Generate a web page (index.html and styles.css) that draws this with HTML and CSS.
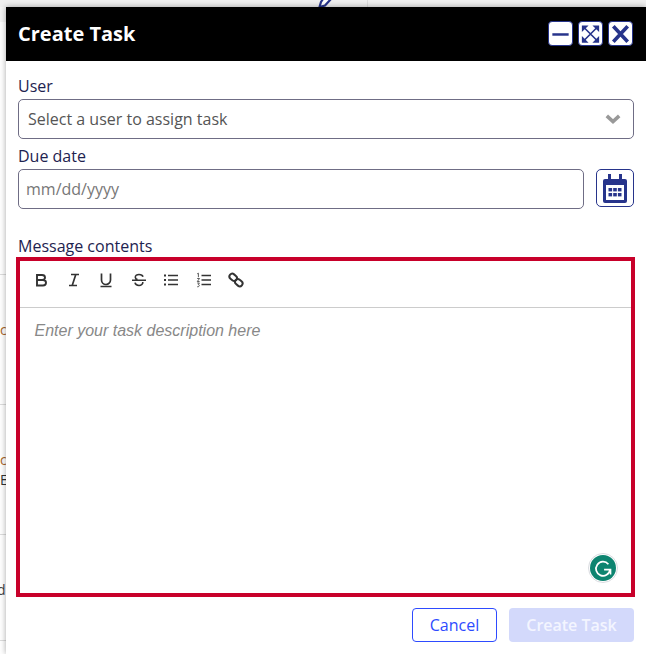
FILE: index.html
```html
<!DOCTYPE html>
<html lang="en">
<head>
<meta charset="utf-8">
<title>Create Task</title>
<link rel="stylesheet" href="styles.css">
</head>
<body>
<div class="backdrop" aria-hidden="true">
  <svg class="bg-pencil" viewBox="0 0 16 8" width="16" height="8"><path d="M1.500 7 L3 2 L5 -1 L13 -1 L7 5.500 Z" fill="#fff" stroke="#27348b" stroke-width="2.200"/></svg>
  <span class="bg-vline"></span>
  <span class="bg-frag f1">c</span>
  <span class="bg-frag f2">c</span>
  <span class="bg-frag f3">E</span>
  <span class="bg-frag f4">d</span>
  <span class="bg-line l1"></span>
  <span class="bg-line l2"></span>
  <span class="bg-line l3"></span>
  <span class="bg-line l4"></span>
</div>
<main class="dialog">
  <header class="head">
    <h1 class="title">Create Task</h1>
    <div class="win-btns">
      <button class="win-btn"><svg viewBox="0 0 24 24" width="24" height="24"><path d="M3.500 12.500H20.500" stroke="#27348b" stroke-width="2.600" fill="none"/></svg></button>
      <button class="win-btn"><svg viewBox="0 0 24 24" width="24" height="24"><g fill="none" stroke="#27348b" stroke-width="1.700"><path d="M6 6 L18 18 M18 6 L6 18"/></g><g fill="#27348b"><path d="M3 3H10L3 10Z"/><path d="M21 3H14L21 10Z"/><path d="M3 21H10L3 14Z"/><path d="M21 21H14L21 14Z"/></g></svg></button>
      <button class="win-btn"><svg viewBox="0 0 24 24" width="24" height="24"><path d="M4.500 4 L19.500 20 M19.500 4 L4.500 20" stroke="#27348b" stroke-width="3.800" fill="none"/></svg></button>
    </div>
  </header>
  <section class="body">
    <label class="label label-user">User</label>
    <div class="field select">
      <span>Select a user to assign task</span>
      <svg class="chev" viewBox="0 0 16 10" width="16" height="10"><path d="M1.800 1.800 L8 7.500 L14.200 1.800" fill="none" stroke="#999" stroke-width="3.600"/></svg>
    </div>
    <label class="label label-date">Due date</label>
    <div class="date-row">
      <div class="field date">mm/dd/yyyy</div>
      <button class="cal-btn">
        <svg viewBox="0 0 24 29" width="24" height="29"><path d="M0 7a2 2 0 0 1 2-2h20a2 2 0 0 1 2 2v20a2 2 0 0 1-2 2H2a2 2 0 0 1-2-2Z" fill="#27348b"/><rect x="5" y="0" width="3" height="7" fill="#27348b"/><rect x="16" y="0" width="3" height="7" fill="#27348b"/><rect x="3" y="11" width="18" height="15" fill="#fff"/><g fill="#27348b"><rect x="5.500" y="14" width="3.600" height="3.400"/><rect x="10.200" y="14" width="3.600" height="3.400"/><rect x="14.900" y="14" width="3.600" height="3.400"/><rect x="5.500" y="19" width="3.600" height="3.400"/><rect x="10.200" y="19" width="3.600" height="3.400"/><rect x="14.900" y="19" width="3.600" height="3.400"/></g></svg>
      </button>
    </div>
    <label class="label label-msg">Message contents</label>
    <div class="editor">
      <div class="toolbar">
        <span class="tool"><svg viewBox="0 0 16 16" width="16" height="16"><path d="M4 3H9C13 3 13 8 9 8H4ZM4 8H10C14 8 14 13.500 10 13.500H4Z" fill="none" stroke="#333" stroke-width="1.900"/></svg></span>
        <span class="tool"><svg viewBox="0 0 16 16" width="16" height="16"><path d="M5 2.500H13M3 13.500H11M9.800 2.500L6.200 13.500" fill="none" stroke="#333" stroke-width="1.700"/></svg></span>
        <span class="tool"><svg viewBox="0 0 16 16" width="16" height="16"><path d="M3.500 1.500V8a4.500 4.500 0 0 0 9 0V1.500M2.500 14.500H13.500" fill="none" stroke="#333" stroke-width="1.700"/></svg></span>
        <span class="tool"><svg viewBox="0 0 16 16" width="16" height="16"><path d="M12 4.800C11.500 3 10 2.500 8 2.500 6 2.500 4.300 3.500 4.300 5.200 4.300 6.500 5.200 7.200 6.500 7.600M11.800 10c.2 2-1.500 3.500-3.800 3.500-2.200 0-3.700-1-4-2.800M1 8.300H15" fill="none" stroke="#333" stroke-width="1.600"/></svg></span>
        <span class="tool"><svg viewBox="0 0 16 16" width="16" height="16"><path d="M5 3.500H15M5 8H15M5 12.500H15" stroke="#333" stroke-width="1.600" fill="none"/><path d="M1 3.500H3M1 8H3M1 12.500H3" stroke="#333" stroke-width="2" fill="none"/></svg></span>
        <span class="tool"><svg viewBox="0 0 16 16" width="16" height="16"><path d="M5.500 3.500H15M5.500 8H15M5.500 12.500H15" stroke="#333" stroke-width="1.600" fill="none"/><path d="M1.200 1.800L2.400 1.200V5.200M1.200 6.500H3.500L1.300 9.500H3.600M1.200 11H3.400L2.300 12.500C3.800 12.500 3.800 15 1.200 14.800" stroke="#333" stroke-width=".8" fill="none"/></svg></span>
        <span class="tool"><svg viewBox="0 0 16 16" width="16" height="16"><g fill="none" stroke="#333" stroke-width="2"><rect x="1.200" y="2.500" width="8" height="5.600" rx="2.800" transform="rotate(40 5.200 5.300)"/><rect x="6.800" y="7.900" width="8" height="5.600" rx="2.800" transform="rotate(40 10.800 10.700)"/></g></svg></span>
      </div>
      <div class="editor-area">
        <p class="placeholder">Enter your task description here</p>
        <span class="grammarly"><svg viewBox="0 0 24 24" width="26" height="26"><circle cx="12" cy="12" r="12" fill="#0d8470"/><path d="M17 8.500A6.500 6.500 0 1 0 18.500 13.500" fill="none" stroke="#fff" stroke-width="1.600"/><path d="M13 13.500H19V18" fill="none" stroke="#fff" stroke-width="1.400"/></svg></span>
      </div>
    </div>
    <div class="actions">
      <button class="btn cancel">Cancel</button>
      <button class="btn create">Create Task</button>
    </div>
  </section>
</main>
</body>
</html>
```
FILE: styles.css
```css
* { box-sizing: border-box; }
html, body { margin: 0; padding: 0; }
body {
  width: 646px;
  height: 654px;
  overflow: hidden;
  position: relative;
  background: #fff;
  font-family: "Open Sans", sans-serif;
  color: #1e2350;
}
.backdrop { position: absolute; inset: 0; overflow: hidden; background: linear-gradient(#f0f0f0 0 7px, #f5f5f5 7px 22px, #fff 22px); }
.bg-pencil { position: absolute; left: 318px; top: 0; }
.bg-vline { position: absolute; left: 367px; top: 0; width: 1px; height: 7px; background: #ddd; }
.bg-frag { position: absolute; left: 0; font-size: 14px; line-height: 16px; color: #444; }
.f1 { top: 322px; color: #a8662a; }
.f2 { top: 452px; color: #a8662a; }
.f3 { top: 472px; color: #333; }
.f4 { top: 582px; left: -3px; color: #444; }
.bg-line { position: absolute; left: 0; width: 6px; height: 1px; background: #dcdcdc; }
.l1 { top: 404px; }
.l2 { top: 534px; }
.l3 { top: 640px; }
.l4 { top: 274px; }
.dialog {
  position: relative;
  margin: 7px 0 0 6px;
  width: 640px;
  height: 647px;
  background: #fff;
  box-shadow: 0 0 6px rgba(0, 0, 0, .35);
}
.head {
  height: 54px;
  background: #000;
  display: flex;
  align-items: center;
  justify-content: space-between;
  padding: 0 13px 1px 12px;
}
.title { margin: 0; font-size: 20px; font-weight: 700; color: #fff; line-height: 27px; }
.win-btns { display: flex; gap: 5px; }
.win-btn {
  width: 25px;
  height: 25px;
  padding: 0;
  display: flex;
  align-items: center;
  justify-content: center;
  background: #fff;
  border: 1px solid #27348b;
  border-radius: 4px;
}
.body { padding: 14px 12px 0 12px; }
.label { display: block; font-size: 16px; line-height: 22px; font-weight: 500; }
.label-user { margin-bottom: 2px; margin-top: 0; }
.field {
  border: 1px solid #6f6d85;
  border-radius: 5px;
  background: #fff;
  font-size: 16px;
  color: #555;
  display: flex;
  align-items: center;
}
.select { height: 40px; width: 616px; padding: 0 12px 0 9px; justify-content: space-between; }
.label-date { margin-top: 6px; margin-bottom: 2px; }
.date-row { display: flex; gap: 12px; align-items: flex-start; }
.date { width: 566px; height: 40px; padding: 0 7px; color: #777; }
.cal-btn {
  width: 38px;
  height: 38px;
  padding: 0;
  background: #fff;
  border: 1px solid #27348b;
  border-radius: 5px;
  display: flex;
  align-items: center;
  justify-content: center;
}
.label-msg { margin-top: 26px; margin-bottom: 0; }
.editor {
  margin-left: -2px;
  width: 619px;
  height: 340px;
  border: 4px solid #c8002a;
  display: flex;
  flex-direction: column;
}
.toolbar {
  height: 47px;
  border-bottom: 1px solid #ccc;
  display: flex;
  align-items: flex-start;
  padding: 11px 0 0 13px;
  gap: 16.500px;
  flex: none;
}
.tool { width: 16px; height: 16px; display: flex; align-items: center; justify-content: center; color: #333; }
.editor-area { flex: 1; position: relative; padding: 13px 14.500px; }
.placeholder {
  margin: 0;
  font-family: "Liberation Sans", sans-serif;
  font-style: italic;
  font-size: 16px;
  line-height: 19px;
  color: #888;
}
.grammarly {
  position: absolute;
  right: 13px;
  bottom: 10px;
  width: 30px;
  height: 30px;
  border-radius: 50%;
  background: #fff;
  border: 1px solid #d9dbe0;
  display: flex;
  align-items: center;
  justify-content: center;
}
.actions { display: flex; justify-content: flex-end; gap: 12px; margin-top: 11px; }
.btn {
  height: 34px;
  font-family: "Open Sans", sans-serif;
  font-size: 16px;
  font-weight: 600;
  border-radius: 4px;
  padding: 0;
}
.cancel { width: 85px; background: #fff; border: 1px solid #2e4bff; color: #2e4bff; font-weight: 500; }
.create { width: 125px; background: #d3d9fb; border: 0; color: #f3f5ff; }
```
